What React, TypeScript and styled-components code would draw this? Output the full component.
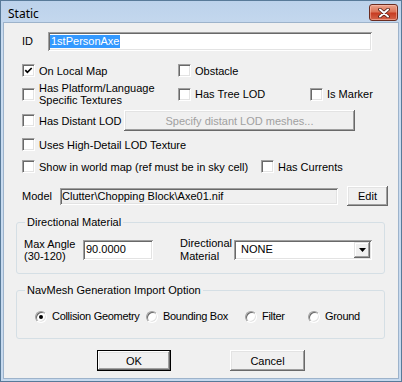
import React from 'react';
import styled, { createGlobalStyle } from 'styled-components';

const GlobalStyle = createGlobalStyle`
  html, body {
    margin: 0;
    padding: 0;
    background: #ffffff;
  }
  body {
    font-family: "Liberation Sans", Arial, sans-serif;
    font-size: 11px;
    color: #000;
  }
`;

const Window = styled.div`
  width: 402px;
  height: 382px;
  box-sizing: border-box;
  border: 1px solid #587a99;
  background: linear-gradient(#bcd2eb, #cadcf0 40px, #c6d9ee);
  padding: 0 2px 2px;
  display: flex;
  flex-direction: column;
`;

const TitleBar = styled.div`
  height: 21px;
  flex: none;
  display: flex;
  justify-content: space-between;
  align-items: flex-start;
`;

const Title = styled.div`
  font-family: "Noto Sans", "Open Sans", sans-serif;
  font-size: 12px;
  line-height: 16px;
  padding: 5px 0 0 5px;
  color: #000;
`;

const CloseButton = styled.div`
  width: 29px;
  height: 17px;
  margin: 3px 1px 0 0;
  box-sizing: border-box;
  border: 1px solid #6b2c20;
  border-radius: 3px;
  background: linear-gradient(#eba48d, #dc7458 45%, #c73c22 55%, #d4654a);
  box-shadow: inset 0 0 0 1px rgba(255, 200, 185, 0.5);
  display: flex;
  align-items: center;
  justify-content: center;
`;

const Client = styled.div`
  flex: 1;
  border: 1px solid #9db3cb;
  background: #f0f0f0;
  padding: 8px 0 0 18px;
  display: flex;
  flex-direction: column;
`;

const FieldRow = styled.div<{ $mt?: number; $h: number }>`
  display: flex;
  align-items: center;
  margin-top: ${(p) => p.$mt ?? 0}px;
  height: ${(p) => p.$h}px;
`;

const Cell = styled.div<{ $w?: number; $ml?: number; $lh?: number }>`
  width: ${(p) => (p.$w ? `${p.$w}px` : 'auto')};
  margin-left: ${(p) => p.$ml ?? 0}px;
  flex: none;
  line-height: ${(p) => p.$lh ?? 13}px;
  white-space: nowrap;
`;

const TextField = styled.div<{ $w: number; $h: number; $readOnly?: boolean; $pl?: number }>`
  box-sizing: border-box;
  width: ${(p) => p.$w}px;
  height: ${(p) => p.$h}px;
  flex: none;
  background: ${(p) => (p.$readOnly ? '#f0f0f0' : '#ffffff')};
  box-shadow: inset 1px 1px #a0a0a0, inset -1px -1px #ffffff, inset 2px 2px #696969,
    inset -2px -2px #e3e3e3;
  padding: 0 2px 0 ${(p) => p.$pl ?? 2}px;
  display: flex;
  align-items: center;
  white-space: nowrap;
  overflow: hidden;
  line-height: 13px;
`;

const Selected = styled.span`
  background: #3399ff;
  color: #ffffff;
  line-height: 13px;
  padding: 0 1px;
`;

const CheckRow = styled.div<{ $mt: number; $h: number; $cols: string }>`
  display: grid;
  grid-template-columns: ${(p) => p.$cols};
  align-items: center;
  margin-top: ${(p) => p.$mt}px;
  height: ${(p) => p.$h}px;
`;

const CheckLabel = styled.div`
  display: flex;
  align-items: center;
  gap: 4px;
  white-space: nowrap;
  line-height: 12px;
`;

const Box = styled.span`
  width: 13px;
  height: 13px;
  box-sizing: border-box;
  flex: none;
  background: #ffffff;
  border-style: solid;
  border-width: 1px;
  border-color: #a0a0a0 #ffffff #ffffff #a0a0a0;
  box-shadow: inset 1px 1px #696969, inset -1px -1px #e3e3e3;
  display: flex;
  align-items: center;
  justify-content: center;
`;

const PushButton = styled.div<{ $w: number; $h: number; $default?: boolean; $disabled?: boolean }>`
  box-sizing: border-box;
  width: ${(p) => p.$w}px;
  height: ${(p) => p.$h}px;
  flex: none;
  background: #f0f0f0;
  border: ${(p) => (p.$default ? '1px solid #000' : 'none')};
  box-shadow: inset -1px -1px #696969, inset 1px 1px #ffffff, inset -2px -2px #a0a0a0,
    inset 2px 2px #e3e3e3;
  color: ${(p) => (p.$disabled ? '#a0a0a0' : '#000')};
  display: flex;
  align-items: center;
  justify-content: center;
  white-space: nowrap;
`;

const Group = styled.fieldset<{ $mt: number; $pt: number; $pb: number }>`
  margin: ${(p) => p.$mt}px 0 0 -6px;
  width: 369px;
  box-sizing: border-box;
  min-inline-size: 0;
  border: 1px solid #d5dfe5;
  border-radius: 3px;
  padding: ${(p) => p.$pt}px 0 ${(p) => p.$pb}px 7px;
`;

const Legend = styled.legend`
  margin-left: 1px;
  padding: 0 2px;
  line-height: 13px;
  font-size: 11px;
`;

const GroupRow = styled.div<{ $h: number; $ml?: number }>`
  display: flex;
  align-items: center;
  height: ${(p) => p.$h}px;
  margin-left: ${(p) => p.$ml ?? 0}px;
`;

const Combo = styled.div<{ $w: number }>`
  box-sizing: border-box;
  width: ${(p) => p.$w}px;
  height: 20px;
  flex: none;
  background: #ffffff;
  box-shadow: inset 1px 1px #a0a0a0, inset -1px -1px #ffffff, inset 2px 2px #696969,
    inset -2px -2px #e3e3e3;
  padding: 2px;
  display: flex;
  align-items: center;
`;

const ComboText = styled.div`
  flex: 1;
  padding-left: 5px;
  line-height: 13px;
`;

const ComboArrow = styled.div`
  width: 16px;
  height: 16px;
  box-sizing: border-box;
  background: #f0f0f0;
  box-shadow: inset -1px -1px #696969, inset 1px 1px #e3e3e3, inset -2px -2px #a0a0a0,
    inset 2px 2px #ffffff;
  display: flex;
  align-items: center;
  justify-content: center;
`;

const RadioItem = styled.div<{ $w?: number }>`
  width: ${(p) => (p.$w ? `${p.$w}px` : 'auto')};
  flex: none;
  display: flex;
  align-items: center;
  gap: 5px;
  white-space: nowrap;
  line-height: 13px;
  letter-spacing: -0.3px;
`;

const RadioCircle = styled.span<{ $checked?: boolean }>`
  width: 12px;
  height: 12px;
  flex: none;
  box-sizing: border-box;
  border-radius: 50%;
  border: 1px solid;
  border-color: #a0a0a0 #ffffff #ffffff #a0a0a0;
  box-shadow: inset 1px 1px #696969, inset -1px -1px #e3e3e3;
  background: #ffffff;
  display: flex;
  align-items: center;
  justify-content: center;

  &::after {
    content: '';
    display: ${(p) => (p.$checked ? 'block' : 'none')};
    width: 4px;
    height: 4px;
    border-radius: 50%;
    background: #000;
  }
`;

const ButtonBar = styled.div`
  display: flex;
  justify-content: center;
  gap: 59px;
  margin: 11px 0 0 -18px;
`;

const Check = ({ label, checked }: { label: React.ReactNode; checked?: boolean }) => (
  <CheckLabel>
    <Box>
      {checked && (
        <svg width="9" height="9" viewBox="0 0 9 9">
          <polyline points="1.3,4.2 3.4,6.4 7.7,2" fill="none" stroke="#000" strokeWidth="1.7" />
        </svg>
      )}
    </Box>
    <span>{label}</span>
  </CheckLabel>
);

const Radio = ({ label, checked, w }: { label: string; checked?: boolean; w?: number }) => (
  <RadioItem $w={w}>
    <RadioCircle $checked={checked} />
    <span>{label}</span>
  </RadioItem>
);

export default function App() {
  return (
    <>
      <GlobalStyle />
      <Window>
        <TitleBar>
          <Title>Static</Title>
          <CloseButton>
            <svg width="12" height="10" viewBox="0 0 12 10">
              <path d="M2 1.5 L10 8.5 M10 1.5 L2 8.5" stroke="#4a1b12" strokeWidth="3.6" strokeLinecap="round" />
              <path d="M2 1.5 L10 8.5 M10 1.5 L2 8.5" stroke="#ffffff" strokeWidth="2" strokeLinecap="round" />
            </svg>
          </CloseButton>
        </TitleBar>
        <Client>
          <FieldRow $mt={1} $h={19}>
            <Cell $w={26}>ID</Cell>
            <TextField $w={324} $h={19} $pl={2}>
              <Selected>1stPersonAxe</Selected>
            </TextField>
          </FieldRow>

          <CheckRow $mt={12} $h={15} $cols="156px 132px auto">
            <Check label="On Local Map" checked />
            <Check label="Obstacle" />
          </CheckRow>
          <CheckRow $mt={4} $h={24} $cols="156px 132px auto">
            <Check
              label={
                <>
                  Has Platform/Language
                  <br />
                  Specific Textures
                </>
              }
            />
            <Check label="Has Tree LOD" />
            <Check label="Is Marker" />
          </CheckRow>
          <CheckRow $mt={4} $h={21} $cols="102px auto">
            <Check label="Has Distant LOD" />
            <PushButton $w={231} $h={21} $disabled>
              Specify distant LOD meshes...
            </PushButton>
          </CheckRow>
          <CheckRow $mt={6} $h={15} $cols="auto">
            <Check label="Uses High-Detail LOD Texture" />
          </CheckRow>
          <CheckRow $mt={7} $h={15} $cols="239px auto">
            <Check label="Show in world map (ref must be in sky cell)" />
            <Check label="Has Currents" />
          </CheckRow>

          <FieldRow $mt={12} $h={20}>
            <Cell $w={38}>Model</Cell>
            <TextField $w={278} $h={17} $readOnly $pl={2}>
              Clutter\Chopping Block\Axe01.nif
            </TextField>
            <Cell $ml={9}>
              <PushButton $w={41} $h={20}>
                Edit
              </PushButton>
            </Cell>
          </FieldRow>

          <Group $mt={10} $pt={10} $pb={13}>
            <Legend>Directional Material</Legend>
            <GroupRow $h={21}>
              <Cell $w={59} $lh={12}>
                Max Angle
                <br />
                (30-120)
              </Cell>
              <TextField $w={70} $h={20} $pl={3}>
                90.0000
              </TextField>
              <Cell $w={54} $ml={27} $lh={13}>
                Directional
                <br />
                Material
              </Cell>
              <Combo $w={138}>
                <ComboText>NONE</ComboText>
                <ComboArrow>
                  <svg width="7" height="4" viewBox="0 0 7 4">
                    <polygon points="0,0 7,0 3.5,4" fill="#000" />
                  </svg>
                </ComboArrow>
              </Combo>
            </GroupRow>
          </Group>

          <Group $mt={10} $pt={12} $pb={14}>
            <Legend>NavMesh Generation Import Option</Legend>
            <GroupRow $h={15} $ml={11}>
              <Radio label="Collision Geometry" checked w={111} />
              <Radio label="Bounding Box" w={99} />
              <Radio label="Filter" w={63} />
              <Radio label="Ground" />
            </GroupRow>
          </Group>

          <ButtonBar>
            <PushButton $w={74} $h={21} $default>
              OK
            </PushButton>
            <PushButton $w={75} $h={21}>
              Cancel
            </PushButton>
          </ButtonBar>
        </Client>
      </Window>
    </>
  );
}
